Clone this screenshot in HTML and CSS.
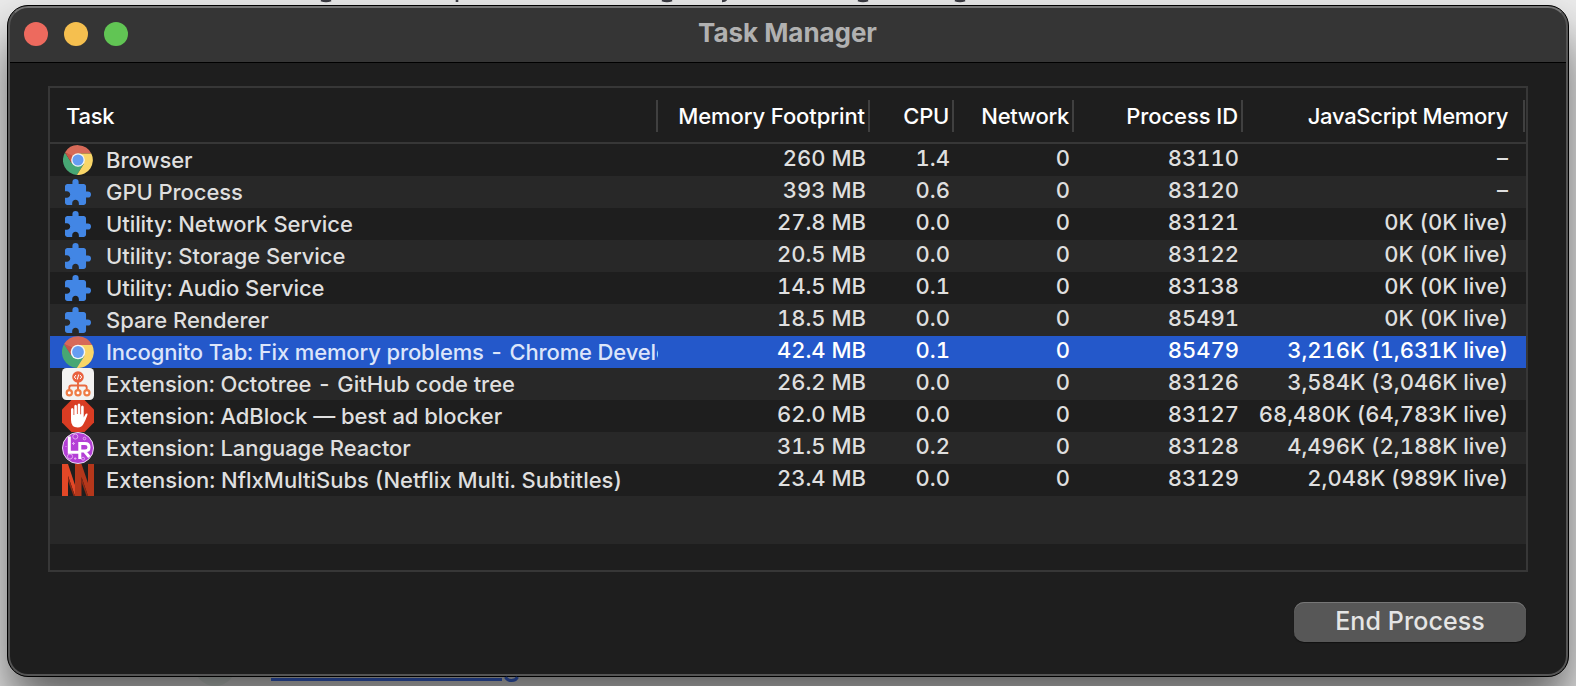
FILE: index.html
```html
<!DOCTYPE html>
<html lang="en">
<head>
<meta charset="utf-8">
<title>Task Manager</title>
<link rel="stylesheet" href="styles.css">
</head>
<body>
<svg class="defs" width="0" height="0" aria-hidden="true">
  <symbol id="chrome" viewBox="0 0 32 32">
    <path d="M2.100 8A16 16 0 0 0 14.800 32L22.500 19.700 16 16 9.500 19.700Z" fill="#47a774"/>
    <path d="M16 16 2.100 8A16 16 0 0 1 30.200 9H16Z" fill="#d76a58"/>
    <path d="M2.100 8 9.200 19.500 12 12Z" fill="#c85646"/>
    <path d="M16 16 22.500 19.700 14.800 32A16 16 0 0 0 30.200 9H16Z" fill="#f9d668"/>
    <circle cx="16" cy="16" r="7.300" fill="#f4f6f5"/>
    <circle cx="16" cy="16" r="5.900" fill="#669df1"/>
  </symbol>
  <symbol id="puzzle" viewBox="2 1 21 21">
    <path fill="#4286e5" d="M20.500 11H19V7c0-1.100-.9-2-2-2h-4V3.500a2.500 2.500 0 0 0-5 0V5H4c-1.100 0-1.990.9-1.990 2v3.800H3.500c1.490 0 2.700 1.210 2.700 2.700s-1.210 2.700-2.700 2.700H2V20c0 1.100.9 2 2 2h3.800v-1.500c0-1.490 1.210-2.700 2.700-2.700s2.700 1.210 2.700 2.700V22H17c1.100 0 2-.9 2-2v-4h1.500a2.500 2.500 0 0 0 0-5z"/>
  </symbol>
  <symbol id="octotree" viewBox="0 0 32 32">
    <rect width="32" height="32" rx="4.500" fill="#f3f2f1"/>
    <circle cx="16" cy="9" r="5.800" fill="#e9613f"/>
    <path d="M14 7 12.300 9 14 11M18 7l1.700 2L18 11M16.700 6.500l-1.400 5" fill="none" stroke="#fff" stroke-width="1"/>
    <path d="M16 14v8M7.300 22v-2.500q0-2 2-2h13.400q2 0 2 2V22" fill="none" stroke="#e9683f" stroke-width="1.900"/>
    <g fill="#fff" stroke="#ef7c45" stroke-width="2.200"><circle cx="7.300" cy="24.700" r="2.600"/><circle cx="16" cy="24.700" r="2.600"/><circle cx="24.900" cy="24.700" r="2.600"/></g>
  </symbol>
  <symbol id="adblock" viewBox="0 0 32 32">
    <path d="M9.400 0h13.200L32 9.400v13.200L22.600 32H9.400L0 22.600V9.400Z" fill="#d93c23"/>
    <path d="M9 9.500q0-1.500 1.200-1.500t1.300 1.500V15h.8V6.200q0-1.500 1.300-1.500t1.300 1.500V14h.8V5q0-1.500 1.300-1.500T18.300 5v9.200h.8V7q0-1.500 1.300-1.500T21.700 7v10.500l1.700-3.200q.8-1.300 1.900-.7.500.4.100 1.500-1.800 5.300-3.700 8.500-1.800 3.900-6 3.900-6.700 0-6.700-7.500Z" fill="#fff"/>
  </symbol>
  <symbol id="reactor" viewBox="0 0 32 32">
    <circle cx="16" cy="16" r="15.500" fill="#b43fd6" stroke="#eddcf2"/>
    <g fill="none" stroke="#e3a8f0" stroke-width="1"><circle cx="13.300" cy="4.600" r="2.500"/><circle cx="22.500" cy="6.500" r="1.300"/><circle cx="8" cy="24.500" r="2.600"/><circle cx="21" cy="26.700" r="1.500"/><path d="M10 11.500h3M11.500 10v3M12 26.500h2.500M13.200 25.300v2.500M4 14v1"/></g>
    <path d="M7.300 4.500V20.300H17.500M17.800 27V11.500H23q4 0 4 3.700t-4 3.700H18M22.300 19 27.300 25" fill="none" stroke="#fff" stroke-width="3"/>
  </symbol>
  <symbol id="netflix" viewBox="0 0 32 32">
    <path d="M0 0h6l7 21V0h5v32h-5L6 12v20H0Z" fill="#e34827"/>
    <path d="M13 0h6.500L26 19V0h6v32h-6L19.500 13v19H13Z" fill="#b5371b"/>
    <path d="M6 12 13 32h-1.500L6 17ZM19.500 13 26 32h-1.500l-5-14Z" fill="#8f2913"/>
  </symbol>
</svg>

<svg class="backdrop" width="1576" height="686" aria-hidden="true">
  <g fill="none" stroke="#3b3b42" stroke-width="2.600">
    <path d="M321 0q5 1.700 10 0M662 0q5 1.700 10 0M858 0q5 1.700 10 0M955 0q5 1.700 10 0M457 0v2M722 1q3 0 4-1.500"/>
  </g>
  <circle cx="215" cy="665" r="21" fill="#dce3df"/>
</svg>

<main class="window">
  <header class="titlebar">
    <div class="lights"><i class="light close"></i><i class="light minimize"></i><i class="light zoom"></i></div>
    <h1 class="title">Task Manager</h1>
  </header>
  <section class="content">
    <div class="table">
      <div class="row head"><div>Task</div><div class="wide">Memory Footprint</div><div>CPU</div><div>Network</div><div class="wide">Process ID</div><div>JavaScript Memory</div></div>
      <div class="row"><div class="task"><svg class="icon medium"><use href="#chrome"/></svg><span>Browser</span></div><div>260 MB</div><div>1.4</div><div>0</div><div>83110</div><div>–</div></div>
      <div class="row"><div class="task"><svg class="icon small"><use href="#puzzle"/></svg><span>GPU Process</span></div><div>393 MB</div><div>0.6</div><div>0</div><div>83120</div><div>–</div></div>
      <div class="row"><div class="task"><svg class="icon small"><use href="#puzzle"/></svg><span>Utility: Network Service</span></div><div>27.8 MB</div><div>0.0</div><div>0</div><div>83121</div><div>0K (0K live)</div></div>
      <div class="row"><div class="task"><svg class="icon small"><use href="#puzzle"/></svg><span>Utility: Storage Service</span></div><div>20.5 MB</div><div>0.0</div><div>0</div><div>83122</div><div>0K (0K live)</div></div>
      <div class="row"><div class="task"><svg class="icon small"><use href="#puzzle"/></svg><span>Utility: Audio Service</span></div><div>14.5 MB</div><div>0.1</div><div>0</div><div>83138</div><div>0K (0K live)</div></div>
      <div class="row"><div class="task"><svg class="icon small"><use href="#puzzle"/></svg><span>Spare Renderer</span></div><div>18.5 MB</div><div>0.0</div><div>0</div><div>85491</div><div>0K (0K live)</div></div>
      <div class="row selected"><div class="task"><svg class="icon"><use href="#chrome"/></svg><span>Incognito Tab: Fix memory problems - Chrome Develo</span></div><div>42.4 MB</div><div>0.1</div><div>0</div><div>85479</div><div>3,216K (1,631K live)</div></div>
      <div class="row"><div class="task"><svg class="icon"><use href="#octotree"/></svg><span>Extension: Octotree - GitHub code tree</span></div><div>26.2 MB</div><div>0.0</div><div>0</div><div>83126</div><div>3,584K (3,046K live)</div></div>
      <div class="row"><div class="task"><svg class="icon"><use href="#adblock"/></svg><span>Extension: AdBlock — best ad blocker</span></div><div>62.0 MB</div><div>0.0</div><div>0</div><div>83127</div><div>68,480K (64,783K live)</div></div>
      <div class="row"><div class="task"><svg class="icon"><use href="#reactor"/></svg><span>Extension: Language Reactor</span></div><div>31.5 MB</div><div>0.2</div><div>0</div><div>83128</div><div>4,496K (2,188K live)</div></div>
      <div class="row"><div class="task loose"><svg class="icon"><use href="#netflix"/></svg><span>Extension: NflxMultiSubs (Netflix Multi. Subtitles)</span></div><div>23.4 MB</div><div>0.0</div><div>0</div><div>83129</div><div>2,048K (989K live)</div></div>
      <div class="filler"></div>
    </div>
    <button class="end">End Process</button>
  </section>
</main>
<svg class="backdrop" width="1576" height="686" aria-hidden="true">
  <path d="M271 679.500H502" stroke="#1d3470" stroke-width="3"/>
  <path d="M505.500 677.200q1.500 3.300 6 3.300t6-3.300" fill="none" stroke="#1d3470" stroke-width="3"/>
</svg>
</body>
</html>
```
FILE: styles.css
```css
* { box-sizing: border-box; }
body {
  margin: 0;
  height: 686px;
  padding: 5px 7px 0;
  overflow: hidden;
  background: #ececec;
  font-family: Inter, "Liberation Sans", sans-serif;
}
.defs { position: absolute; }
.backdrop { position: absolute; left: 0; top: 0; }
.window {
  position: relative;
  height: 672px;
  border: 1px solid #000;
  border-radius: 21px;
  background: #1e1e1e;
  overflow: hidden;
  box-shadow: 0 30px 50px rgba(0, 0, 0, .6);
}
.window::after {
  content: "";
  position: absolute;
  inset: 0;
  border: 2px solid #555;
  border-top-color: #747474;
  border-radius: 20px;
}
.titlebar {
  display: flex;
  align-items: center;
  height: 57px;
  padding: 0 16px;
  background: #353535;
  border-bottom: 1px solid #000;
}
.lights { display: flex; gap: 16px; width: 104px; }
.light { width: 24px; height: 24px; border-radius: 50%; }
.close { background: #ed6a5e; }
.minimize { background: #f5bf4f; }
.zoom { background: #61c554; }
.title {
  flex: 1;
  margin: 0 105px 0 0;
  text-align: center;
  font-size: 26px;
  font-weight: 700;
  line-height: 52px;
  height: 54px;
  letter-spacing: -.05px;
  color: #b1b1b1;
}
.content {
  display: flex;
  flex-direction: column;
  align-items: flex-end;
  padding: 23px 40px 0;
}
.table {
  width: 1480px;
  height: 486px;
  border: 2px solid #373737;
  color: #dfdfdf;
  font-size: 22px;
  font-weight: 450;
  font-variant-numeric: tabular-nums;
}
.row {
  display: grid;
  grid-template-columns: 608px 212px 84px 120px 169px 282px;
  height: 32px;
  line-height: 28px;
  text-align: right;
  white-space: nowrap;
}
.row > div { padding-right: 4px; }
.row > div:last-child { padding-right: 17px; letter-spacing: -.03px; }
.row:nth-child(odd) { background: #282828; }
.row.head {
  height: 56px;
  padding: 12px 0 10px;
  border-bottom: 2px solid #373737;
  background: #1e1e1e;
  color: #fff;
  font-weight: 500;
  line-height: 32px;
  letter-spacing: -.3px;
}
.head > .wide { letter-spacing: -.08px; }
.head > div { border-right: 2px solid #404040; padding-right: 3px; }
.head > div:first-child { padding-left: 16px; text-align: left; }
.row.head > div:last-child { padding-right: 15px; letter-spacing: -.3px; }
.row > .task {
  display: flex;
  align-items: center;
  gap: 12px;
  padding: 0 0 0 12px;
  overflow: hidden;
  line-height: 32px;
  letter-spacing: -.06px;
}
.row > .loose { letter-spacing: 0; }
.icon { flex: none; width: 32px; height: 32px; }
.icon.medium { width: 30px; height: 30px; margin: 0 1px; }
.icon.small { width: 26px; height: 26px; margin: 0 3px; }
.row.selected { background: #2458ca; color: #fff; }
.selected > .task { color: #dce5fa; letter-spacing: -.14px; }
.filler { height: 48px; background: #282828; }
.end {
  width: 232px;
  height: 40px;
  margin: 30px 2px 0 0;
  padding: 0 0 2px;
  border: 0;
  border-radius: 10px;
  background: #575757;
  box-shadow: inset 0 1px #777, 0 1px 1px #111;
  color: #e5e5e5;
  font: 450 25px/38px Inter, sans-serif;
  letter-spacing: .1px;
}
```
